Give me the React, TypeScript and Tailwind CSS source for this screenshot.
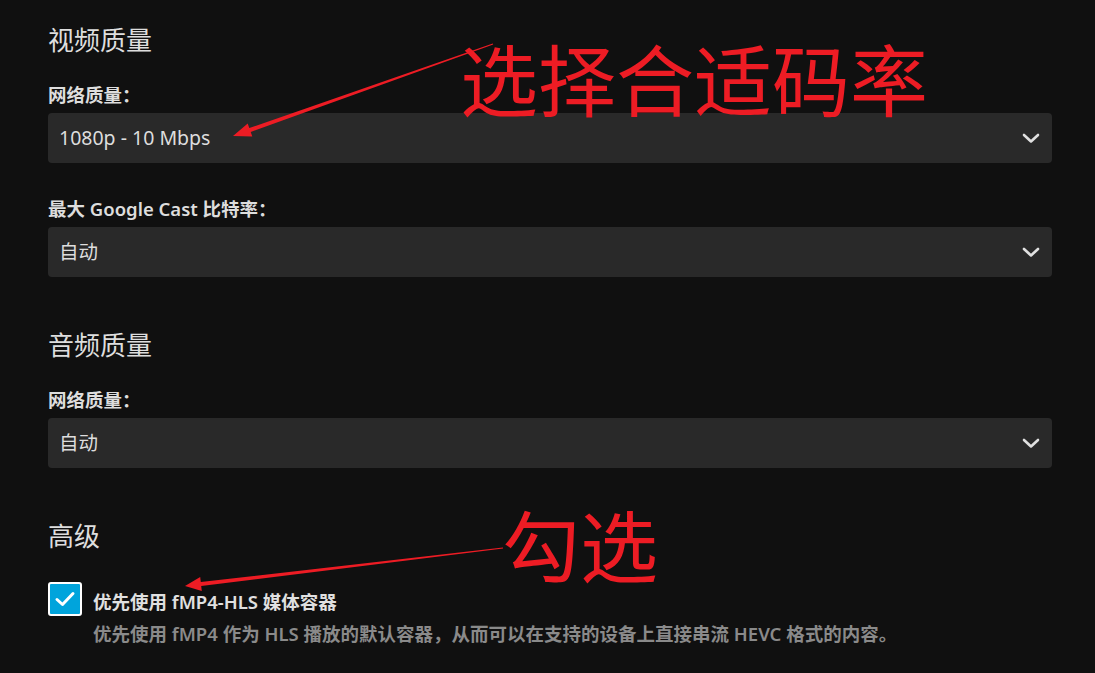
const uiFont = { fontFamily: '"Noto Sans", "Noto Sans CJK SC", sans-serif' };
const markFont = { fontFamily: '"Noto Sans CJK SC", sans-serif' };

type SelectProps = {
  label: string;
  value: string;
  first?: boolean;
};

const Chevron = () => (
  <svg width="18" height="12" viewBox="0 0 18 12" className="shrink-0">
    <polyline
      points="2,3 9,9.5 16,3"
      fill="none"
      stroke="#e0e0e0"
      strokeWidth="2.6"
      strokeLinecap="round"
      strokeLinejoin="round"
    />
  </svg>
);

const SelectField: React.FC<SelectProps> = ({ label, value, first }) => {
  return (
    <div className={first ? "mt-[25px]" : "mt-[34px]"}>
      <div className="text-[18.5px] leading-[24px] font-semibold text-[#dddddd]">{label}</div>
      <div className="mt-[6px] h-[50px] rounded-[4px] bg-[#292929] flex items-center justify-between pl-[11px] pr-[12px]">
        <span className="text-[19.5px] text-[#dddddd]">{value}</span>
        <Chevron />
      </div>
    </div>
  );
};

const Heading = ({ children, top }: { children: React.ReactNode; top: string }) => (
  <h2 className={`${top} text-[26px] leading-[36px] font-normal text-[#dedede]`}>{children}</h2>
);

export default function App() {
  return (
    <div className="relative min-h-screen bg-[#101010] overflow-hidden" style={uiFont}>
      <div className="w-[1004px] ml-[48px] pt-[22px] pb-[30px]">
        <Heading top="mt-0">视频质量</Heading>
        <SelectField first label="网络质量：" value="1080p - 10 Mbps" />
        <SelectField label="最大 Google Cast 比特率：" value="自动" />

        <Heading top="mt-[50px]">音频质量</Heading>
        <SelectField first label="网络质量：" value="自动" />

        <Heading top="mt-[50px]">高级</Heading>
        <div className="mt-[28px] flex items-start gap-[11px]">
          <div className="w-[34px] h-[34px] shrink-0 rounded-[3px] border-2 border-white bg-[#00a4dc] flex items-center justify-center">
            <svg width="22" height="18" viewBox="0 0 22 18">
              <polyline
                points="3,9.5 8.5,14.5 19,3.5"
                fill="none"
                stroke="#ffffff"
                strokeWidth="3"
                strokeLinecap="round"
                strokeLinejoin="round"
              />
            </svg>
          </div>
          <div className="pt-[8px]">
            <div className="text-[18.5px] leading-[24px] font-semibold text-[#e0e0e0]">优先使用 fMP4-HLS 媒体容器</div>
            <div className="mt-[8px] text-[18.5px] leading-[24px] font-semibold text-[#8a8a8a]">
              优先使用 fMP4 作为 HLS 播放的默认容器，从而可以在支持的设备上直接串流 HEVC 格式的内容。
            </div>
          </div>
        </div>
      </div>

      {/* annotations */}
      <svg className="absolute inset-0 pointer-events-none" width="1095" height="673" viewBox="0 0 1095 673">
        <polygon
          fill="#ed1c24"
          points="233,136 252.3,136.6 250.7,131.9 493.2,44.5 492.8,43.5 249.3,128.1 247.7,123.4"
        />
        <polygon
          fill="#ed1c24"
          points="185,586 201.8,591 201.2,586 503.1,548.6 502.9,547.4 200.8,582 200.2,577"
        />
      </svg>
      <div className="absolute left-[460px] top-[38px] text-[78px] leading-none text-[#ed1c24] whitespace-nowrap" style={markFont}>
        选择合适码率
      </div>
      <div className="absolute left-[502px] top-[504px] text-[78px] leading-none text-[#ed1c24] whitespace-nowrap" style={markFont}>
        勾选
      </div>
    </div>
  );
}
